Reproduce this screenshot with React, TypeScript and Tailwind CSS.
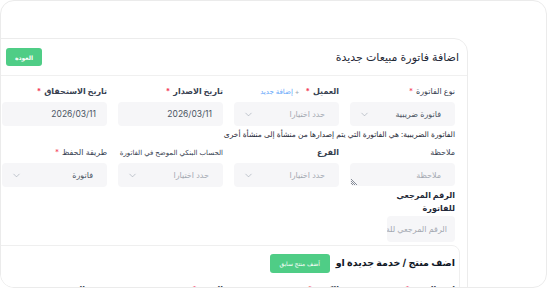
import { ChevronDown } from "lucide-react";

const font = { fontFamily: '"Inter", "DejaVu Sans", sans-serif' };

function Label({ text, req, bold, extra, small }: { text: string; req?: boolean; bold?: boolean; extra?: React.ReactNode; small?: boolean }) {
  return (
    <div className={`flex h-[12px] items-center gap-[3px] whitespace-nowrap leading-none text-[#374151] ${small ? "text-[7px]" : "text-[8px]"} ${bold ? "font-bold text-[#1f2937]" : ""}`}>
      <span>{text}</span>
      {req && <span className="text-[#f43f5e]">*</span>}
      {extra}
    </div>
  );
}

function Select({ value, placeholder }: { value?: string; placeholder?: string }) {
  return (
    <div className="mt-[5px] flex h-[24px] items-center justify-between rounded-[4px] bg-[#f6f6f8] pl-[9px] pr-[14px] text-[8px]">
      {value ? <span className="text-[#4b5563]">{value}</span> : <span className="text-[#a3a8b1]">{placeholder}</span>}
      <ChevronDown size={11} strokeWidth={1.3} className="text-[#9ca3af]" />
    </div>
  );
}

function DateInput({ value }: { value: string }) {
  return (
    <div className="mt-[5px] flex h-[24px] items-center rounded-[4px] bg-[#f6f6f8] pr-[11px] text-[8.5px] text-[#4b5563]">
      {value}
    </div>
  );
}

export default function App() {
  return (
    <div dir="rtl" style={font} className="relative h-[288px] w-[547px] overflow-hidden rounded-[14px] border border-[#ebebeb] bg-white">
      <div className="mr-[78px] mt-[37px] w-[472px] rounded-tr-[14px] border border-[#ececec] bg-white">
        {/* header */}
        <div className="flex h-[37px] items-center justify-between border-b border-[#f0f0f0] pl-[9px] pr-[8px]">
          <h1 className="text-[11px] text-[#1f2937]">اضافة فاتورة مبيعات جديدة</h1>
          <button className="flex h-[18px] w-[36px] items-center justify-center rounded-[3px] bg-[#4fcd86] text-[6px] font-bold text-white">
            العودة
          </button>
        </div>

        {/* form */}
        <div className="pr-[12px] pt-[9px]">
          <div className="grid grid-cols-[repeat(4,105px)] gap-x-[11px]">
            <div>
              <Label text="نوع الفاتورة" req />
              <Select value="فاتورة ضريبية" />
            </div>
            <div>
              <Label
                text="العميل"
                req
                bold
                extra={<span className="mr-[3px] text-[7px] font-normal text-[#60a5fa]"><span className="text-[#9ca3af]">+</span> إضافة جديد</span>}
              />
              <Select placeholder="حدد اختيارا" />
            </div>
            <div>
              <Label text="تاريخ الاصدار" req bold />
              <DateInput value="2026/03/11" />
            </div>
            <div>
              <Label text="تاريخ الاستحقاق" req bold />
              <DateInput value="2026/03/11" />
            </div>
          </div>

          <p className="mt-[3px] text-[7.5px] leading-[12px] text-[#1f2937]">
            الفاتورة الضريبية: هي الفاتورة التي يتم إصدارها من منشأة إلى منشأة أخرى
          </p>

          <div className="mt-[5px] grid grid-cols-[repeat(4,105px)] gap-x-[11px]">
            <div>
              <Label text="ملاحظة" />
              <div className="relative mt-[5px] flex h-[23px] items-center rounded-[4px] bg-[#f6f6f8] pr-[14px] text-[8px] text-[#a3a8b1]">
                ملاحظة
                <svg width="6" height="6" viewBox="0 0 6 6" className="absolute bottom-[1px] left-[1px]">
                  <path d="M0 0 L6 6 M0 2 L4 6 M0 4 L2 6" stroke="#6b7280" strokeWidth="0.8" />
                </svg>
              </div>
            </div>
            <div>
              <Label text="الفرع" bold />
              <Select placeholder="حدد اختيارا" />
            </div>
            <div>
              <Label text="الحساب البنكي الموضح في الفاتورة" small />
              <Select placeholder="حدد اختيارا" />
            </div>
            <div>
              <Label text="طريقة الحفظ" req />
              <Select value="فاتورة" />
            </div>
          </div>

          <div className="mt-[2px] w-[68px]">
            <div className="text-[8px] font-bold leading-[13px] text-[#1f2937]">الرقم المرجعي للفاتورة</div>
            <div className="mt-[1px] flex h-[26px] items-center overflow-hidden whitespace-nowrap rounded-[4px] bg-[#f6f6f8] pr-[8px] text-[8px] text-[#a3a8b1]">
              الرقم المرجعي للة
            </div>
          </div>
        </div>

        {/* products card */}
        <div className="ml-[-4px] mr-[7px] mt-[3px] rounded-tr-[8px] border border-[#efefef] pb-[20px] pr-[4px] pt-[8px]">
          <div className="flex items-center gap-[6px]">
            <h2 className="text-[9.5px] font-bold text-[#111827]">اضف منتج / خدمة جديدة او</h2>
            <button className="flex h-[19px] w-[60px] items-center justify-center rounded-[3px] bg-[#4fcd86] text-[6px] text-white">
              أضف منتج سابق
            </button>
          </div>
          <div className="mt-[10px] grid grid-cols-[repeat(4,105px)] gap-x-[11px]">
            <Label text="اسم المنتج" req bold />
            <Label text="الكمية" req bold />
            <Label text="السعر" req bold />
            <Label text="وحدة المنتج" bold />
          </div>
        </div>
      </div>
    </div>
  );
}
